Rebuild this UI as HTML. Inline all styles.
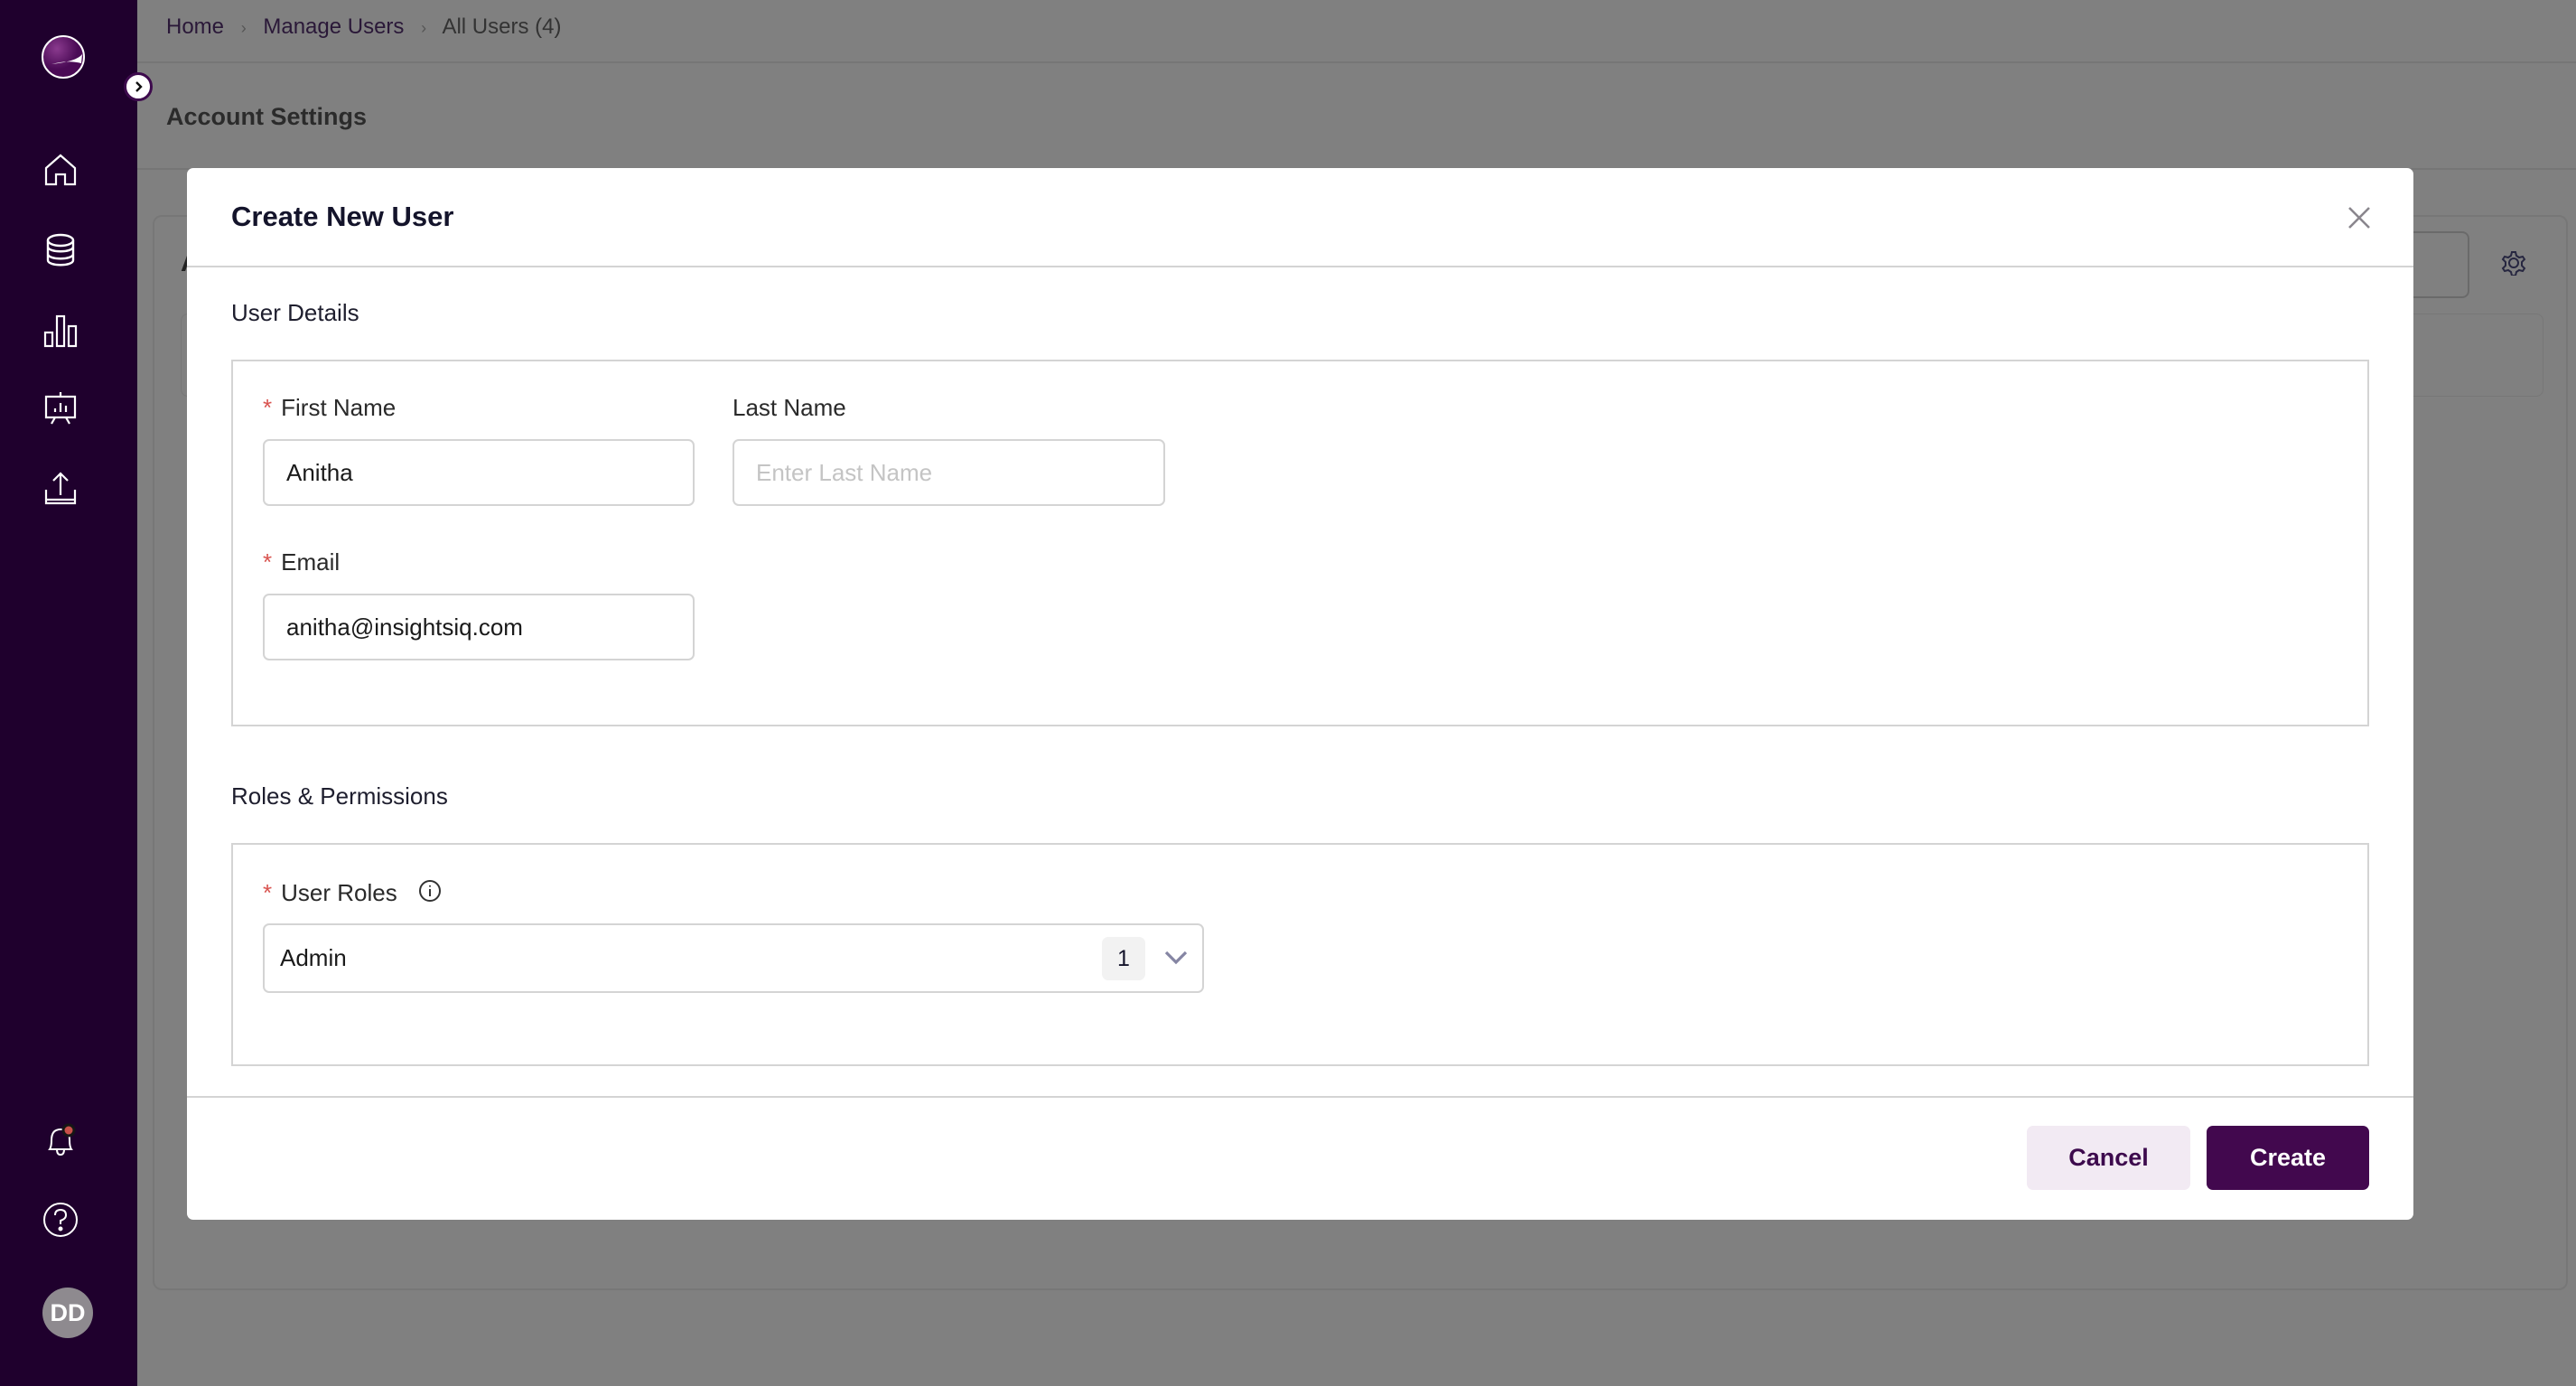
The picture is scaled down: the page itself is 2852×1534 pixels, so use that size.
<!DOCTYPE html>
<html><head><meta charset="utf-8"><style>
*{box-sizing:border-box;margin:0;padding:0}
body{width:2852px;height:1534px;overflow:hidden;background:#808080;font-family:"Liberation Sans",sans-serif;position:relative}
.abs{position:absolute}
.side{left:0;top:0;width:152px;height:1534px;background:#1f002d}
.ic{position:absolute;left:47px;width:40px;height:40px}
.lbl{position:absolute;font-size:26px;color:#2a2a2a}
.star{color:#d9534f;margin-right:10px}
.inp{position:absolute;height:74px;border:2px solid #d4d4d4;border-radius:7px;font-size:26px;color:#1a1a1a;padding-left:24px;line-height:70px;background:#fff}
</style></head><body>
<div class="abs side">
  <svg class="abs" style="left:45px;top:38px" width="50" height="50" viewBox="0 0 50 50"><defs><radialGradient id="g" cx="35%" cy="30%"><stop offset="0" stop-color="#8a3a8e"/><stop offset="1" stop-color="#4a0a55"/></radialGradient></defs><circle cx="25" cy="25" r="23" fill="url(#g)" stroke="#fff" stroke-width="2"/><path d="M12 33 Q30 28 45 32 L46 22 Q40 30 12 33Z" fill="#fff"/></svg>
  <svg class="ic" style="top:168px" viewBox="0 0 40 40" fill="none" stroke="#fff" stroke-width="2.2"><path d="M4 18 L20 4 L36 18 V36 H25 V25 H15 V36 H4Z"/></svg>
  <svg class="ic" style="top:257px" viewBox="0 0 40 40" fill="none" stroke="#fff" stroke-width="2.4"><ellipse cx="20" cy="9" rx="14" ry="6"/><path d="M6 9 V31 C6 38 34 38 34 31 V9 M6 16 C6 23 34 23 34 16 M6 24 C6 31 34 31 34 24"/></svg>
  <svg class="ic" style="top:346px" viewBox="0 0 40 40" fill="none" stroke="#fff" stroke-width="2.2"><rect x="3" y="22" width="8" height="15"/><rect x="16" y="4" width="8" height="33"/><rect x="29" y="15" width="8" height="22"/></svg>
  <svg class="ic" style="top:432px" viewBox="0 0 40 40" fill="none" stroke="#fff" stroke-width="2.2"><path d="M20 2 V7 M4 7 H36 V30 H4Z M10 37 L14 30 M30 37 L26 30 M14 24 V20 M20 24 V14 M26 24 V17"/></svg>
  <svg class="ic" style="top:520px" viewBox="0 0 40 40" fill="none" stroke="#fff" stroke-width="2.2"><path d="M20 4 V28 M12 12 L20 4 L28 12 M4 22 V37 H36 V22 M4 33 H36"/></svg>
  <svg class="ic" style="top:1242px" viewBox="0 0 40 40" fill="none" stroke="#fff" stroke-width="2"><path d="M8 30 Q10 27 10 20 Q10 8 20 8 Q30 8 30 20 Q30 27 32 30Z M16 30 Q16 36 20 36 Q24 36 24 30"/><circle cx="29" cy="9" r="6" fill="#c9504a" stroke="#161616" stroke-width="3"/></svg>
  <svg class="ic" style="top:1330px" viewBox="0 0 40 40" fill="none" stroke="#fff" stroke-width="2"><circle cx="20" cy="20" r="18"/><path d="M14 15 Q14 9 20 9 Q26 9 26 15 Q26 19 20 21 V25"/><circle cx="20" cy="30" r="1.5" fill="#fff"/></svg>
  <div class="abs" style="left:47px;top:1425px;width:56px;height:56px;border-radius:50%;background:#8e8a8f;color:#fff;font-weight:bold;font-size:27px;line-height:56px;text-align:center">DD</div>
</div>
<div class="abs" style="left:137px;top:80px;width:32px;height:32px;border-radius:50%;background:#fff;border:3px solid #3d0a4d;display:flex;align-items:center;justify-content:center"><svg width="14" height="14" viewBox="0 0 14 14" fill="none" stroke="#111" stroke-width="2.4"><path d="M5 2 L10 7 L5 12"/></svg></div>

<div class="abs" style="left:184px;top:16px;font-size:24px;color:#2a1838">Home <span style="color:#555;margin:0 12px;font-size:18px">›</span> Manage Users <span style="color:#555;margin:0 12px;font-size:18px">›</span> <span style="color:#333">All Users (4)</span></div>
<div class="abs" style="left:152px;top:68px;width:2700px;height:2px;background:#767676"></div>
<div class="abs" style="left:184px;top:114px;font-size:27px;color:#2b2b2b;font-weight:bold">Account Settings</div>
<div class="abs" style="left:152px;top:186px;width:2700px;height:2px;background:#767676"></div>
<div class="abs" style="left:169px;top:238px;width:2674px;height:1190px;border:2px solid #777;border-radius:10px"></div>
<div class="abs" style="left:200px;top:274px;font-size:30px;color:#222;font-weight:bold">A</div>
<div class="abs" style="left:200px;top:347px;width:2616px;height:92px;border:1px solid #777;border-radius:8px"></div>
<div class="abs" style="left:2600px;top:256px;width:134px;height:74px;border:2px solid #6a6a6a;border-radius:8px"></div>
<svg class="abs" style="left:2769px;top:277px" width="28" height="28" viewBox="0 0 28 28" fill="none" stroke="#262640" stroke-width="2"><circle cx="14" cy="14" r="5"/><path d="M12 2h4l1 4 3 2 4-1 2 3-3 3v4l3 3-2 3-4-1-3 2-1 4h-4l-1-4-3-2-4 1-2-3 3-3v-4L2 10l2-3 4 1 3-2z"/></svg>

<div class="abs" style="left:207px;top:186px;width:2465px;height:1164px;background:#fff;border-radius:7px">
  <div class="abs" style="left:49px;top:36px;font-size:31px;font-weight:bold;color:#14142b">Create New User</div>
  <svg class="abs" style="left:2392px;top:42px" width="26" height="26" viewBox="0 0 26 26" stroke="#8a868d" stroke-width="2.6"><path d="M2 2 L24 24 M24 2 L2 24"/></svg>
  <div class="abs" style="left:0;top:108px;width:2465px;height:2px;background:#d4d4d4"></div>
  <div class="abs" style="left:49px;top:145px;font-size:26px;color:#1e1e2e">User Details</div>
  <div class="abs" style="left:49px;top:212px;width:2367px;height:406px;border:2px solid #d4d4d4"></div>
  <div class="lbl" style="left:84px;top:250px"><span class="star">*</span>First Name</div>
  <div class="inp" style="left:84px;top:300px;width:478px">Anitha</div>
  <div class="lbl" style="left:604px;top:250px">Last Name</div>
  <div class="inp" style="left:604px;top:300px;width:479px;color:#c4c4c4">Enter Last Name</div>
  <div class="lbl" style="left:84px;top:421px"><span class="star">*</span>Email</div>
  <div class="inp" style="left:84px;top:471px;width:478px">anitha@insightsiq.com</div>
  <div class="abs" style="left:49px;top:680px;font-size:26px;color:#1e1e2e">Roles &amp; Permissions</div>
  <div class="abs" style="left:49px;top:747px;width:2367px;height:247px;border:2px solid #d4d4d4"></div>
  <div class="lbl" style="left:84px;top:787px"><span class="star">*</span>User Roles</div>
  <svg class="abs" style="left:255px;top:786px" width="28" height="28" viewBox="0 0 28 28" fill="none" stroke="#333" stroke-width="2"><circle cx="14" cy="14" r="11"/><path d="M14 12 V20 M14 8 V9.5"/></svg>
  <div class="inp" style="left:84px;top:836px;width:1042px;height:77px;padding-left:17px;line-height:73px">Admin</div>
  <div class="abs" style="left:1013px;top:851px;width:48px;height:48px;background:#f2f2f2;border-radius:7px;font-size:25px;line-height:48px;text-align:center;color:#14142b">1</div>
  <svg class="abs" style="left:1082px;top:866px" width="26" height="16" viewBox="0 0 26 16" fill="none" stroke="#8585a3" stroke-width="3.2"><path d="M2 2 L13 13 L24 2"/></svg>
  <div class="abs" style="left:0;top:1027px;width:2465px;height:2px;background:#d4d4d4"></div>
  <div class="abs" style="left:2037px;top:1060px;width:181px;height:71px;background:#f2eaf3;border-radius:7px;color:#3d0a4d;font-weight:bold;font-size:27px;line-height:71px;text-align:center">Cancel</div>
  <div class="abs" style="left:2236px;top:1060px;width:180px;height:71px;background:#42084e;border-radius:7px;color:#fff;font-weight:bold;font-size:27px;line-height:71px;text-align:center">Create</div>
</div>
</body></html>
